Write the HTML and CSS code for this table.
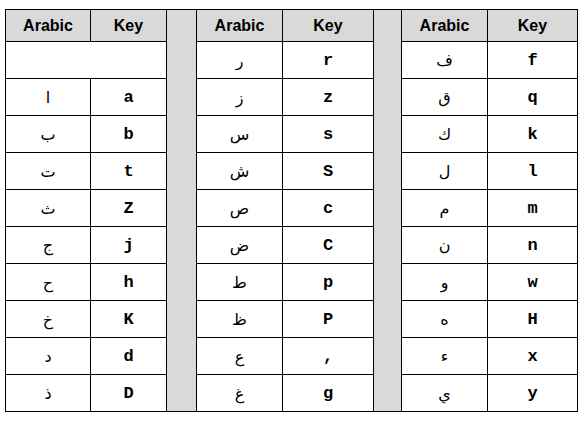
FILE: index.html
```html
<!DOCTYPE html>
<html lang="en">
<head>
<meta charset="utf-8">
<title>Arabic Keyboard Map</title>
<link rel="stylesheet" href="styles.css">
</head>
<body>
<table class="map">
  <colgroup>
    <col class="c1"><col class="c2"><col class="gapcol">
    <col class="c4"><col class="c5"><col class="gapcol2">
    <col class="c7"><col class="c8">
  </colgroup>
  <tbody>
    <tr class="head">
      <th>Arabic</th><th>Key</th>
      <td class="gap" rowspan="11"></td>
      <th>Arabic</th><th>Key</th>
      <td class="gap" rowspan="11"></td>
      <th>Arabic</th><th>Key</th>
    </tr>
    <tr><td colspan="2"></td><td class="ar">ر</td><td class="key">r</td><td class="ar">ف</td><td class="key">f</td></tr>
    <tr><td class="ar">ا</td><td class="key">a</td><td class="ar">ز</td><td class="key">z</td><td class="ar">ق</td><td class="key">q</td></tr>
    <tr><td class="ar">ب</td><td class="key">b</td><td class="ar">س</td><td class="key">s</td><td class="ar">ك</td><td class="key">k</td></tr>
    <tr><td class="ar">ت</td><td class="key">t</td><td class="ar">ش</td><td class="key">S</td><td class="ar">ل</td><td class="key">l</td></tr>
    <tr><td class="ar">ث</td><td class="key">Z</td><td class="ar">ص</td><td class="key">c</td><td class="ar">م</td><td class="key">m</td></tr>
    <tr><td class="ar">ج</td><td class="key">j</td><td class="ar">ض</td><td class="key">C</td><td class="ar">ن</td><td class="key">n</td></tr>
    <tr><td class="ar">ح</td><td class="key">h</td><td class="ar">ط</td><td class="key">p</td><td class="ar">و</td><td class="key">w</td></tr>
    <tr><td class="ar">خ</td><td class="key">K</td><td class="ar">ظ</td><td class="key">P</td><td class="ar">ه</td><td class="key">H</td></tr>
    <tr><td class="ar">د</td><td class="key">d</td><td class="ar">ع</td><td class="key">,</td><td class="ar">ء</td><td class="key">x</td></tr>
    <tr><td class="ar">ذ</td><td class="key">D</td><td class="ar">غ</td><td class="key">g</td><td class="ar">ي</td><td class="key">y</td></tr>
  </tbody>
</table>
</body>
</html>
```
FILE: styles.css
```css
html, body {
  margin: 0;
  background: #ffffff;
}
body {
  padding: 9px 0 0 5px;
}
.map {
  border-collapse: collapse;
  table-layout: fixed;
  width: 573px;
  border: 1px solid #000;
  color: #000;
}
.c1 { width: 85px; }
.c2 { width: 76px; }
.gapcol { width: 30px; }
.c4 { width: 86px; }
.c5 { width: 91px; }
.gapcol2 { width: 28px; }
.c7 { width: 86px; }
.c8 { width: 90px; }

.map th, .map td {
  border: 1px solid #000;
  padding: 0;
  text-align: center;
  vertical-align: middle;
}
.map tr {
  height: 37px;
}
.map tr.head {
  height: 32px;
}
.map th {
  background: #d9d9d9;
  font-family: "Liberation Sans", Arial, sans-serif;
  font-weight: bold;
  font-size: 16px;
}
.map .gap {
  background: #d9d9d9;
}
.ar {
  font-family: "DejaVu Sans", sans-serif;
  font-size: 16px;
}
.key {
  font-family: "Courier New", "Liberation Mono", monospace;
  font-weight: bold;
  font-size: 17px;
}
```
